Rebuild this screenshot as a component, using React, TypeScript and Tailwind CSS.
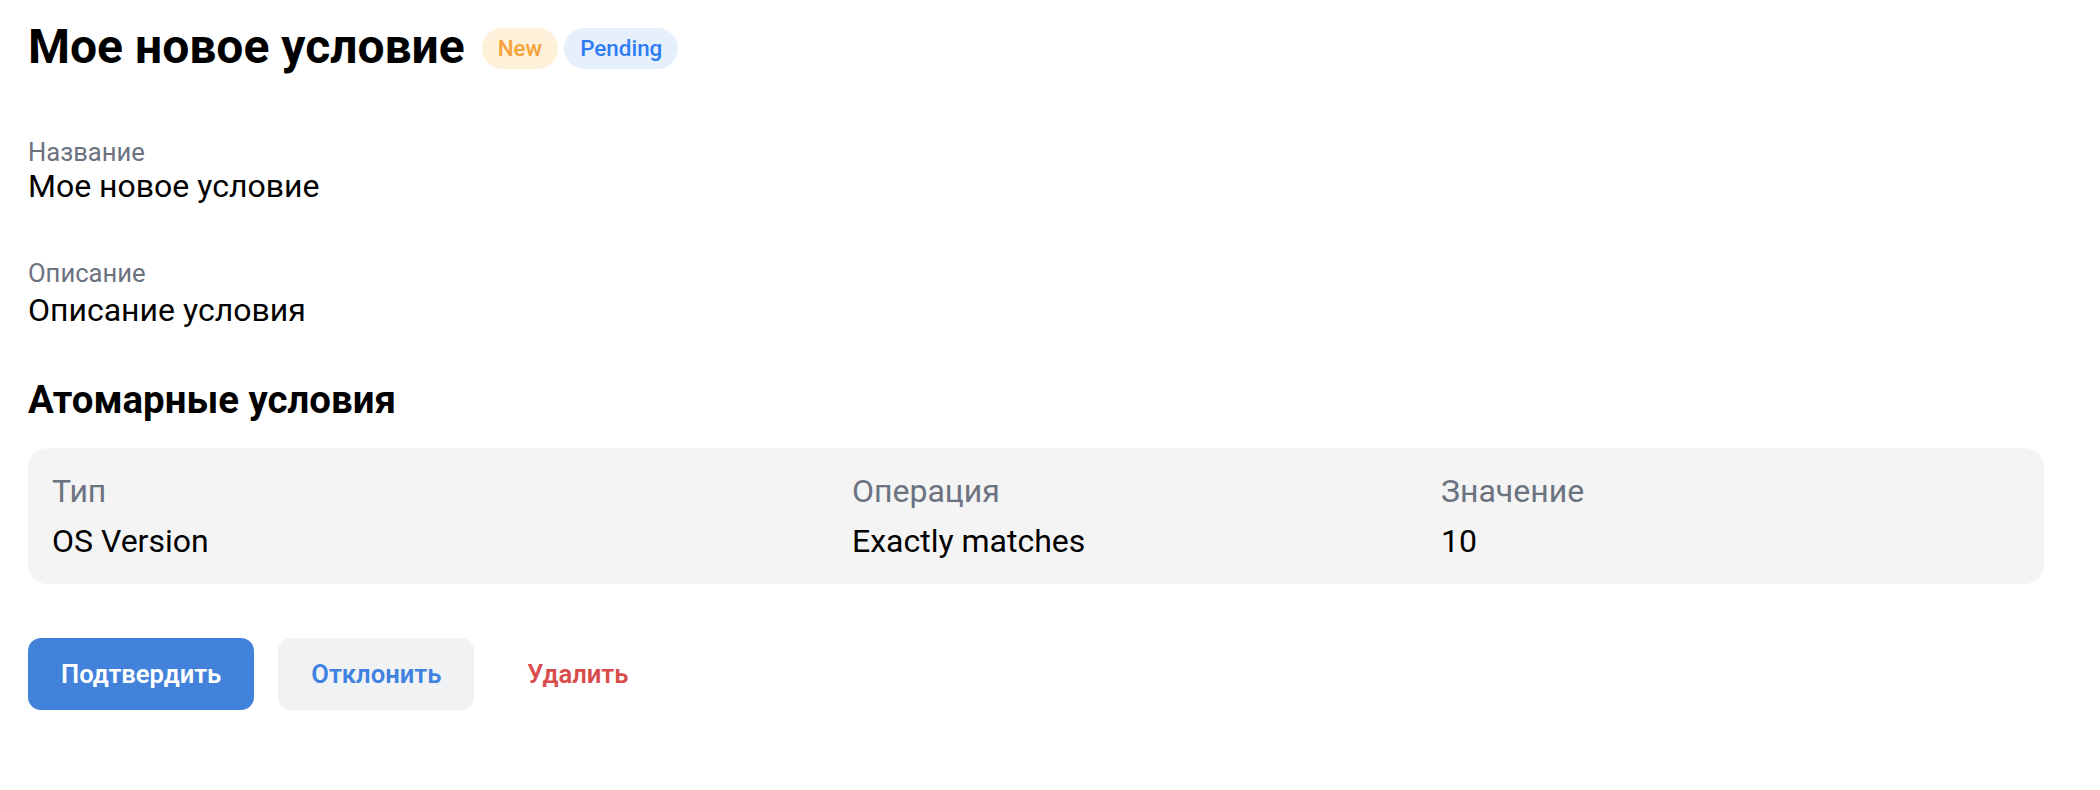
import React from "react";

const labelCls = "text-[25.6px] leading-[32px] text-[#6b7280]";
const valueCls = "text-[32px] leading-[36px] text-black";

export default function App() {
  return (
    <div
      className="min-h-screen bg-white pl-[28px] pr-[56px] pt-[18px]"
      style={{ fontFamily: "Roboto, 'Noto Sans', sans-serif" }}
    >
      <div className="flex h-[58px] items-start">
        <h1 className="text-[48px] font-bold leading-[58px] text-black">Мое новое условие</h1>
        <div className="ml-[17px] mt-[10px] flex items-center gap-[6px]">
          <span className="flex h-[41px] items-center rounded-full bg-[#fef0d9] px-[16px] text-[22.4px] font-medium text-[#f4a23a]">
            New
          </span>
          <span className="flex h-[41px] items-center rounded-full bg-[#e6f0fd] px-[16px] text-[22.4px] font-medium text-[#2f7cf0]">
            Pending
          </span>
        </div>
      </div>

      <div className="mt-[60px]">
        <div className={labelCls}>Название</div>
        <div className={valueCls}>Мое новое условие</div>
      </div>

      <div className="mt-[53px]">
        <div className={labelCls}>Описание</div>
        <div className={`${valueCls} mt-[3px]`}>Описание условия</div>
      </div>

      <h2 className="mt-[49px] text-[38.4px] font-bold leading-[46px] text-black">Атомарные условия</h2>

      <div className="mt-[25px] grid grid-cols-[800px_589px_1fr] gap-y-[2px] rounded-[20px] bg-[#f4f4f4] px-[24px] py-[19px] text-[32px] leading-[48px]">
        <div className="text-[#6b7280]">Тип</div>
        <div className="text-[#6b7280]">Операция</div>
        <div className="text-[#6b7280]">Значение</div>
        <div className="text-black">OS Version</div>
        <div className="text-black">Exactly matches</div>
        <div className="text-black">10</div>
      </div>

      <div className="mt-[54px] flex items-center gap-[24px]">
        <button className="flex h-[72px] items-center rounded-[13px] bg-[#4382db] px-[33px] text-[25.6px] font-semibold text-white">
          Подтвердить
        </button>
        <button className="flex h-[72px] items-center rounded-[13px] bg-[#f1f2f4] px-[33px] text-[25.6px] font-semibold text-[#3f82e0]">
          Отклонить
        </button>
        <button className="flex h-[72px] items-center rounded-[13px] pl-[29px] pr-[33px] text-[25.6px] font-semibold text-[#d94c4c]">
          Удалить
        </button>
      </div>
    </div>
  );
}
